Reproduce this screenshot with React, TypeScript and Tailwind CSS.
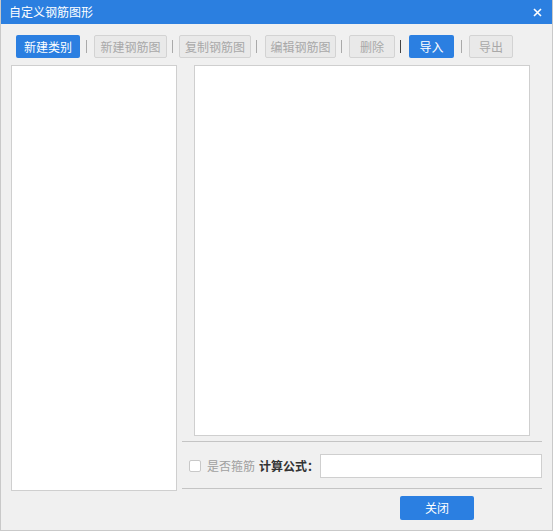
import React from "react";

const font = { fontFamily: '"Microsoft YaHei", "Noto Sans CJK SC", sans-serif' };

function Sep({ dark, m }: { dark?: boolean; m: string }) {
  return <span className={`${m} h-[13px] w-px ${dark ? "bg-[#444]" : "bg-[#aaa]"}`} />;
}

function ToolButton({ label, primary, w }: { label: string; primary?: boolean; w: string }) {
  return (
    <button
      className={`${w} h-[23px] rounded-[2px] text-[12px] leading-none ${
        primary
          ? "bg-[#2b7fe1] text-white"
          : "border border-[#d3d3d3] bg-[#e9e9e9] text-[#a8a8a8]"
      }`}
    >
      {label}
    </button>
  );
}

export default function App() {
  return (
    <div className="flex h-[531px] w-[553px] flex-col border border-t-0 border-[#c9c9c9] bg-[#f0f0f0]" style={font}>
      <div className="flex h-[24px] shrink-0 items-center justify-between bg-[#2b7fe0] pl-[8px] pr-[10px] text-white">
        <span className="text-[12px]">自定义钢筋图形</span>
        <svg width="9" height="9" viewBox="0 0 9 9">
          <path d="M1 1L8 8M8 1L1 8" stroke="white" strokeWidth="1.6" />
        </svg>
      </div>

      <div className="flex items-center pl-[15px] pt-[11px]">
        <ToolButton label="新建类别" primary w="w-[64px]" />
        <Sep m="ml-[6px] mr-[7px]" />
        <ToolButton label="新建钢筋图" w="w-[73px]" />
        <Sep m="ml-[5px] mr-[6px]" />
        <ToolButton label="复制钢筋图" w="w-[72px]" />
        <Sep m="ml-[5px] mr-[8px]" />
        <ToolButton label="编辑钢筋图" w="w-[71px]" />
        <Sep m="ml-[5px] mr-[7px]" />
        <ToolButton label="删除" w="w-[46px]" />
        <Sep dark m="ml-[5px] mr-[8px]" />
        <ToolButton label="导入" primary w="w-[45px]" />
        <Sep m="ml-[7px] mr-[7px]" />
        <ToolButton label="导出" w="w-[44px]" />
      </div>

      <div className="flex pl-[10px] pt-[7px]">
        <div className="h-[426px] w-[166px] border border-[#cfcfcf] bg-white" />
        <div className="ml-[5px] flex w-[360px] flex-col">
          <div className="mx-[12px] h-[371px] border border-[#cfcfcf] bg-white" />
          <div className="mt-[5px] h-px bg-[#c4c4c4]" />
          <div className="mt-[12px] flex h-[24px] items-center">
            <span className="ml-[7px] h-[12px] w-[12px] rounded-[2px] border border-[#c8c8c8] bg-white" />
            <span className="ml-[6px] text-[12px] text-[#a0a0a0]">是否箍筋</span>
            <span className="ml-[4px] text-[12px] font-bold text-[#333]">计算公式：</span>
            <span className="ml-[1px] h-[24px] flex-1 border border-[#cfcfcf] bg-white" />
          </div>
          <div className="mt-[10px] h-px bg-[#c4c4c4]" />
          <div className="mt-[7px] flex">
            <button className="ml-[218px] h-[24px] w-[74px] rounded-[2px] bg-[#2b7fe1] text-[12px] text-white">
              关闭
            </button>
          </div>
        </div>
      </div>
    </div>
  );
}
